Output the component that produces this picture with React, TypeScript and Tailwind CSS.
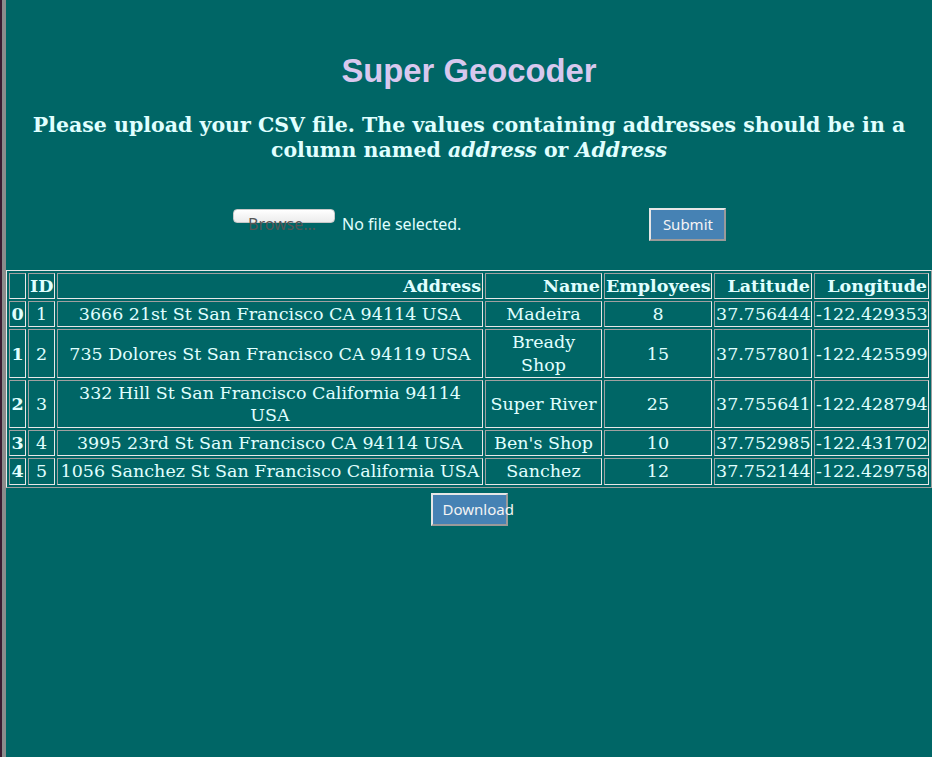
import React from "react";

const rows: [number, number, string, string, number, string, string][] = [
  [0, 1, "3666 21st St San Francisco CA 94114 USA", "Madeira", 8, "37.756444", "-122.429353"],
  [1, 2, "735 Dolores St San Francisco CA 94119 USA", "Bready Shop", 15, "37.757801", "-122.425599"],
  [2, 3, "332 Hill St San Francisco California 94114 USA", "Super River", 25, "37.755641", "-122.428794"],
  [3, 4, "3995 23rd St San Francisco CA 94114 USA", "Ben's Shop", 10, "37.752985", "-122.431702"],
  [4, 5, "1056 Sanchez St San Francisco California USA", "Sanchez", 12, "37.752144", "-122.429758"],
];

const cell =
  "border border-t-[#a0a0a0] border-l-[#a0a0a0] border-r-[#e8e8e8] border-b-[#e8e8e8] p-px align-middle";

export default function App() {
  return (
    <div className="flex h-[757px] w-[932px] overflow-hidden bg-[#006666]">
      <div className="w-[2px] shrink-0 bg-[#3b1c31]" />
      <div className="w-[4px] shrink-0 bg-[#8c8c8c]" />
      <div className="flex min-w-0 flex-1 flex-col">
        <h1
          className="mt-[52px] text-center text-[32.8px] font-bold leading-[37px] text-[#d8c8ee]"
          style={{ fontFamily: '"Liberation Sans", Arial, sans-serif' }}
        >
          Super Geocoder
        </h1>
        <h3
          className="mt-[24px] px-[20px] text-center text-[20.5px] font-bold leading-[25px] text-[#e0ffff]"
          style={{ fontFamily: '"DejaVu Serif", serif' }}
        >
          Please upload your CSV file. The values containing addresses should be in a column named{" "}
          <i>address</i> or <i>Address</i>
        </h3>
        <div
          className="ml-[227px] mt-[45px] flex h-[33px] items-start"
          style={{ fontFamily: '"Noto Sans", "Open Sans", sans-serif' }}
        >
          <div className="mt-px h-[14px] w-[102px] shrink-0 overflow-visible rounded-[4px] border border-[#c8c8c8] bg-gradient-to-b from-white to-[#ececec]">
            <div className="whitespace-nowrap pl-[14px] pt-[4px] text-[16px] leading-[20px] text-[#555555]">
              Browse…
            </div>
          </div>
          <span className="ml-[7px] mt-[4px] text-[16px] leading-[24px] text-[#e0ffff]">No file selected.</span>
          <button
            className="ml-[188px] h-[33px] w-[77px] shrink-0 overflow-visible whitespace-nowrap border-2 border-t-[#e6e6e6] border-l-[#e6e6e6] border-r-[#9a9a9a] border-b-[#9a9a9a] bg-[#4682b4] px-[10px] text-center text-[15px] text-[#f4f4f4]"
          >
            Submit
          </button>
        </div>
        <table
          className="mt-[29px] w-full table-fixed border-separate border-spacing-0.5 border border-t-[#e8e8e8] border-l-[#e8e8e8] border-r-[#a0a0a0] border-b-[#a0a0a0] text-[17.5px] leading-[22.2px] text-[#e0ffff]"
          style={{ fontFamily: '"DejaVu Serif", serif' }}
        >
          <thead>
            <tr className="text-right">
              <th className={`${cell} w-[17px]`}></th>
              <th className={`${cell} w-[27px]`}>ID</th>
              <th className={`${cell} w-[426px]`}>Address</th>
              <th className={`${cell} w-[117px]`}>Name</th>
              <th className={`${cell} w-[108px]`}>Employees</th>
              <th className={`${cell} w-[98px]`}>Latitude</th>
              <th className={`${cell} w-[115px]`}>Longitude</th>
            </tr>
          </thead>
          <tbody>
            {rows.map((r) => (
              <tr key={r[0]} className="text-center">
                <th className={`${cell} font-bold`}>{r[0]}</th>
                <td className={cell}>{r[1]}</td>
                <td className={cell}>{r[2]}</td>
                <td className={`${cell} px-[3px]`}>{r[3]}</td>
                <td className={cell}>{r[4]}</td>
                <td className={cell}>{r[5]}</td>
                <td className={cell}>{r[6]}</td>
              </tr>
            ))}
          </tbody>
        </table>
        <div className="mt-[5px] flex justify-center" style={{ fontFamily: '"Noto Sans", "Open Sans", sans-serif' }}>
          <button className="h-[33px] w-[77px] overflow-visible whitespace-nowrap border-2 border-t-[#e6e6e6] border-l-[#e6e6e6] border-r-[#9a9a9a] border-b-[#9a9a9a] bg-[#4682b4] px-[10px] text-left text-[15px] text-[#f4f4f4]">
            Download
          </button>
        </div>
      </div>
    </div>
  );
}
